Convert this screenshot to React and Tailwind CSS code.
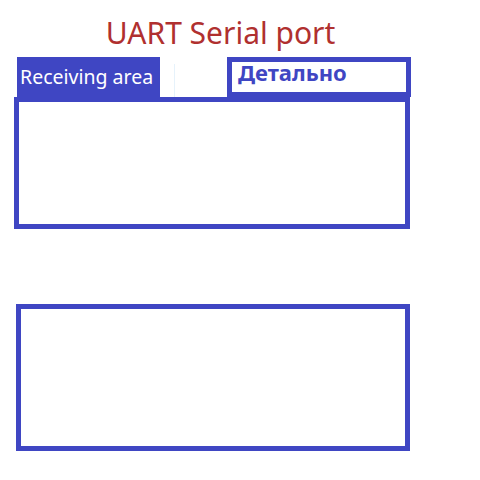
export default function App() {
  return (
    <div className="w-[480px] h-[480px] bg-white" style={{ fontFamily: '"Noto Sans", "Open Sans", sans-serif' }}>
      {/* titulo */}
      <div className="w-[441px] h-[57px] pt-[14px] text-center text-[30px] leading-[38px] text-[#b0302f]">
        UART Serial port
      </div>
      {/* pestanas */}
      <div className="flex h-[40px]">
        <div className="ml-[17px] w-[143px] h-[40px] bg-[#3f46c3] text-white text-[19.5px] leading-[26px] pt-[7px] pl-[3px] whitespace-nowrap">
          Receiving area
        </div>
        <div className="ml-[14px] mt-[7px] w-px h-[33px] bg-[#e6f2fb]" />
        <div className="ml-[52px] w-[184px] h-[40px] border-[5px] border-[#3f46c3] text-[#3f46c3] font-bold text-[22px] leading-[20px] pl-[6px]">
          Детально
        </div>
      </div>
      {/* area de recepcion */}
      <div className="ml-[14px] w-[396px] h-[132px] border-[5px] border-[#3f46c3]" />
      {/* area de envio */}
      <div className="ml-[16px] mt-[75px] w-[394px] h-[147px] border-[5px] border-[#3f46c3]" />
    </div>
  )
}
